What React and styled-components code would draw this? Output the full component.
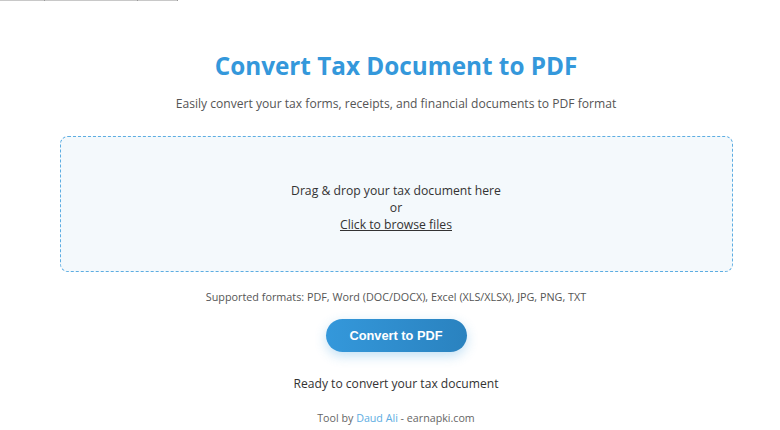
import React from 'react';
import styled, { createGlobalStyle } from 'styled-components';

const GlobalStyle = createGlobalStyle`
  * { box-sizing: border-box; }
  body {
    margin: 0;
    background: #fff;
    font-family: "Open Sans", "Noto Sans", sans-serif;
  }
`;

const App = () => (
  <>
    <GlobalStyle />
    <TopStrip>
      <StripCell $w={45} />
      <StripCell $w={93} />
      <StripCell $w={40} />
    </TopStrip>
    <Page>
      <Title>Convert Tax Document to PDF</Title>
      <Subtitle>
        Easily convert your tax forms, receipts, and financial documents to PDF format
      </Subtitle>

      <DropZone>
        <DropLine>Drag &amp; drop your tax document here</DropLine>
        <DropLine>or</DropLine>
        <BrowseLink>Click to browse files</BrowseLink>
      </DropZone>

      <Formats>Supported formats: PDF, Word (DOC/DOCX), Excel (XLS/XLSX), JPG, PNG, TXT</Formats>

      <ConvertButton>Convert to PDF</ConvertButton>

      <Status>Ready to convert your tax document</Status>

      <Footer>
        Tool by <FooterLink>Daud Ali</FooterLink> - earnapki.com
      </Footer>
    </Page>
  </>
);

export default App;

/* --- Styled Components --- */

const TopStrip = styled.div`
  display: flex;
  height: 1px;
`;

const StripCell = styled.div`
  width: ${(p) => p.$w}px;
  height: 1px;
  background: #c8c8c8;
  border-right: 1px solid #999;
`;

const Page = styled.main`
  display: flex;
  flex-direction: column;
  align-items: center;
  padding: 0 0 0 12px;
`;

const Title = styled.h1`
  margin: 47px 0 0;
  font-size: 24.3px;
  font-weight: 700;
  line-height: 36px;
  color: #3498db;
`;

const Subtitle = styled.p`
  margin: 11px 0 0;
  font-size: 12.1px;
  line-height: 18px;
  color: #555;
`;

const DropZone = styled.div`
  margin-top: 23px;
  width: 673px;
  height: 136px;
  padding-top: 6px;
  border: 1px dashed #5dade2;
  border-radius: 8px;
  background: #f4f9fc;
  display: flex;
  flex-direction: column;
  align-items: center;
  justify-content: center;
  color: #333;
  font-size: 12.2px;
  line-height: 17px;
`;

const DropLine = styled.span``;

const BrowseLink = styled.span`
  text-decoration: underline;
  cursor: pointer;
`;

const Formats = styled.p`
  margin: 17px 0 0;
  font-size: 10.8px;
  line-height: 16px;
  color: #555;
`;

const ConvertButton = styled.button`
  margin-top: 14px;
  width: 141px;
  height: 33px;
  border: none;
  border-radius: 17px;
  background: linear-gradient(90deg, #3498db, #2a82bf);
  color: #fff;
  font-family: "Liberation Sans", Arial, sans-serif;
  font-size: 12.8px;
  font-weight: 700;
  box-shadow: 0 4px 12px rgba(52, 152, 219, 0.3);
  cursor: pointer;
`;

const Status = styled.p`
  margin: 23px 0 0;
  font-size: 12.1px;
  line-height: 18px;
  color: #333;
`;

const Footer = styled.p`
  margin: 17px 0 0;
  font-size: 10.7px;
  line-height: 16px;
  color: #666;
`;

const FooterLink = styled.a`
  color: #5dade2;
  text-decoration: none;
`;
